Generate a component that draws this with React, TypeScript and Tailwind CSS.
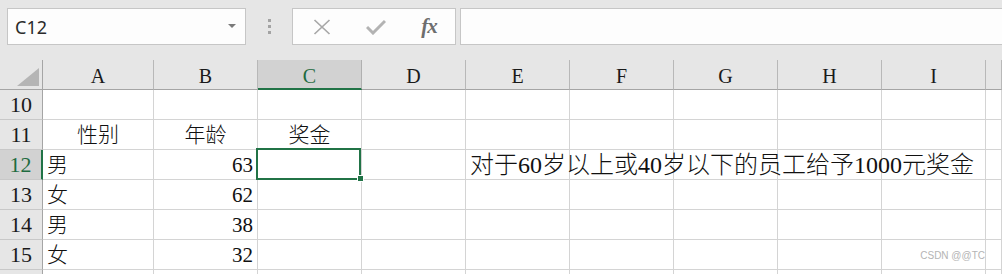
import React from "react";

const serif = "font-['Liberation_Serif','Noto_Sans_CJK_SC',serif]";
const cols = ["A", "B", "C", "D", "E", "F", "G", "H", "I", ""];

type Row = { n: number; cells: Record<string, { text: string; align: "left" | "center" | "right" }> };

const rows: Row[] = [
  { n: 10, cells: {} },
  {
    n: 11,
    cells: {
      A: { text: "性别", align: "center" },
      B: { text: "年龄", align: "center" },
      C: { text: "奖金", align: "center" },
    },
  },
  {
    n: 12,
    cells: {
      A: { text: "男", align: "left" },
      B: { text: "63", align: "right" },
      E: { text: "对于60岁以上或40岁以下的员工给予1000元奖金", align: "left" },
    },
  },
  { n: 13, cells: { A: { text: "女", align: "left" }, B: { text: "62", align: "right" } } },
  { n: 14, cells: { A: { text: "男", align: "left" }, B: { text: "38", align: "right" } } },
  { n: 15, cells: { A: { text: "女", align: "left" }, B: { text: "32", align: "right" } } },
  { n: 16, cells: {} },
];

function FormulaBar() {
  return (
    <div className="h-[60px] bg-[#e6e6e6] flex items-start pt-[8px] pl-[7px]">
      <div className="w-[239px] h-[37px] bg-[#fdfdfd] border border-[#c6c6c6] flex items-center justify-between pl-[7px] pr-[9px]">
        <span className="font-['Noto_Sans',sans-serif] text-[18px] text-[#2b2b2b] leading-none">C12</span>
        <svg width="8" height="5" viewBox="0 0 8 5">
          <path d="M0 0 H8 L4 4 Z" fill="#7a7a7a" />
        </svg>
      </div>
      <div className="w-[46px] h-[37px] flex flex-col items-center justify-center gap-[3px]">
        <span className="w-[3px] h-[3px] bg-[#a3a3a3]" />
        <span className="w-[3px] h-[3px] bg-[#a3a3a3]" />
        <span className="w-[3px] h-[3px] bg-[#a3a3a3]" />
      </div>
      <div className="w-[164px] h-[37px] bg-[#fdfdfd] border border-[#c6c6c6] flex items-center">
        <div className="w-[55px] flex justify-center pl-[2px]">
          <svg width="18" height="16" viewBox="0 0 18 16">
            <path d="M1.5 1 L16.5 15 M16.5 1 L1.5 15" stroke="#a8a8a8" strokeWidth="1.7" />
          </svg>
        </div>
        <div className="w-[55px] flex justify-center">
          <svg width="20" height="16" viewBox="0 0 20 16">
            <path d="M1 8 L7 14 L19 2" stroke="#b3b3b3" strokeWidth="3" fill="none" />
          </svg>
        </div>
        <div className="w-[52px] flex justify-center">
          <span className="font-['Liberation_Serif',serif] italic font-bold text-[21px] text-[#6e6e6e] leading-none tracking-[-1px]">fx</span>
        </div>
      </div>
      <div className="ml-[4px] flex-1 h-[37px] bg-[#fdfdfd] border-l border-t border-b border-[#c6c6c6]" />
    </div>
  );
}

function Sheet() {
  return (
    <div className="grid grid-cols-[43px_111px_104px_104px_104px_104px_104px_104px_104px_104px_1fr] auto-rows-[30px]">
      <div className="h-[30px] bg-[#e6e6e6] border-r border-b border-[#a5a5a5] relative">
        <svg className="absolute left-[17px] top-[8px]" width="22" height="18" viewBox="0 0 22 18">
          <path d="M22 0 V18 H0 Z" fill="#b5b5b5" />
        </svg>
      </div>
      {cols.map((c, i) => {
        const sel = c === "C";
        return (
          <div
            key={i}
            className={
              sel
                ? "bg-[#d2d2d2] border-r border-[#b0b0b0] border-b-2 border-b-[#217346] flex items-center justify-center pt-[3px]"
                : "bg-[#e6e6e6] border-r border-b border-r-[#b8b8b8] border-b-[#a5a5a5] flex items-center justify-center pt-[3px]"
            }
          >
            <span className={`${serif} text-[20px] leading-none ${sel ? "text-[#1e6b40]" : "text-[#1a1a1a]"}`}>{c}</span>
          </div>
        );
      })}
      {rows.map((r) => (
        <React.Fragment key={r.n}>
          <div
            className={
              r.n === 12
                ? "bg-[#d2d2d2] border-r-2 border-r-[#217346] border-b border-b-[#c8c8c8] flex items-end justify-center pb-[2px]"
                : "bg-[#e6e6e6] border-r border-b border-r-[#a5a5a5] border-b-[#c8c8c8] flex items-end justify-center pb-[2px]"
            }
          >
            {r.n < 16 && (
              <span className={`${serif} text-[22px] leading-[24px] ${r.n === 12 ? "text-[#1e6b40]" : "text-[#1a1a1a]"}`}>{r.n}</span>
            )}
          </div>
          {cols.map((c, i) => {
            const cell = r.cells[c];
            const selected = r.n === 12 && c === "C";
            return (
              <div
                key={i}
                className={`bg-white border-r border-b border-[#d4d4d4] flex items-end pb-[2px] px-[4px] ${selected ? "relative" : ""} ${
                  cell?.align === "center" ? "justify-center" : cell?.align === "right" ? "justify-end" : "justify-start"
                }`}
              >
                {cell && (
                  <span className={`${serif} relative z-10 font-light leading-[24px] text-[#111] whitespace-nowrap ${c === "E" ? "text-[24px]" : "text-[21px]"}`}>
                    {cell.text}
                  </span>
                )}
                {selected && (
                  <>
                    <div className="absolute left-[-2px] top-[-2px] w-[105px] h-[32px] border-2 border-[#217346]" />
                    <div className="absolute left-[99px] top-[25px] w-[7px] h-[7px] bg-[#217346] border border-white" />
                  </>
                )}
              </div>
            );
          })}
        </React.Fragment>
      ))}
    </div>
  );
}

export default function App() {
  return (
    <div className="relative w-[1002px] h-[274px] overflow-hidden bg-white">
      <FormulaBar />
      <Sheet />
      <span className="absolute right-[17px] bottom-[13px] font-['Liberation_Sans',sans-serif] text-[10px] text-[#b4b4b4] leading-none">
        CSDN @@TC
      </span>
    </div>
  );
}
